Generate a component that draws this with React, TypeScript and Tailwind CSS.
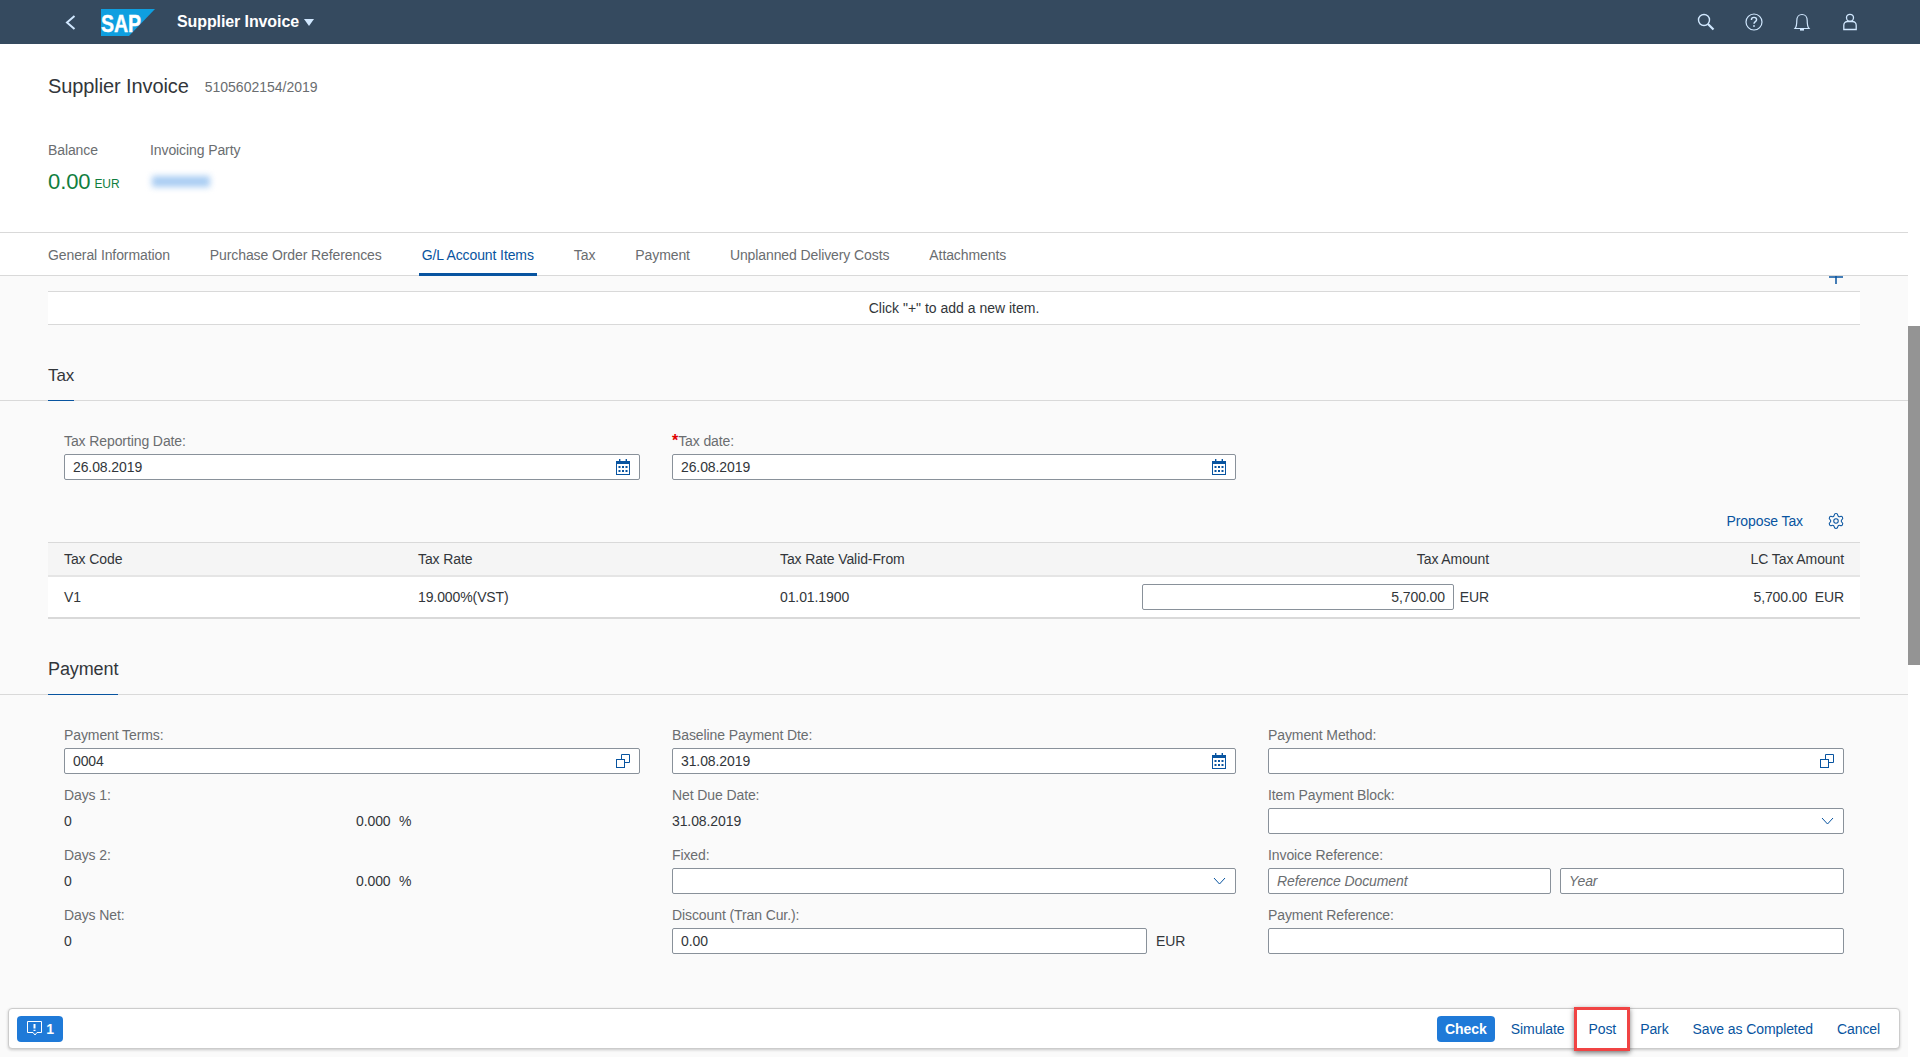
import type { ReactNode } from 'react';
import { Settings } from 'lucide-react';

const CalendarIcon = () => (
  <svg width="14" height="16" viewBox="0 0 14 16" className="text-[#0854a0]">
    <rect x="0.5" y="2.5" width="13" height="13" fill="none" stroke="currentColor" />
    <rect x="0" y="2" width="14" height="3" fill="currentColor" />
    <rect x="3" y="0" width="1.4" height="3" fill="currentColor" />
    <rect x="9.6" y="0" width="1.4" height="3" fill="currentColor" />
    <g fill="currentColor">
      <rect x="2.5" y="7" width="2" height="2" />
      <rect x="6" y="7" width="2" height="2" />
      <rect x="9.5" y="7" width="2" height="2" />
      <rect x="2.5" y="11" width="2" height="2" />
      <rect x="6" y="11" width="2" height="2" />
      <rect x="9.5" y="11" width="2" height="2" />
    </g>
  </svg>
);

const ValueHelpIcon = () => (
  <svg width="14" height="14" viewBox="0 0 14 14" fill="none" stroke="#0854a0">
    <rect x="0.5" y="5.5" width="8" height="8" />
    <path d="M5.5 5V0.5H13.5V8.5H9" />
  </svg>
);

const ChevronIcon = () => (
  <svg width="13" height="8" viewBox="0 0 13 8" fill="none" stroke="#0854a0">
    <path d="M1 1L6.5 7L12 1" />
  </svg>
);

function Input({ value, placeholder, right, icon, className }: { value?: string; placeholder?: string; right?: boolean; icon?: ReactNode; className?: string }) {
  return (
    <div className={`h-[26px] bg-white border border-[#89919a] rounded-[2px] pl-2 pr-2 flex items-center justify-between text-[#32363a] ${className ?? ''}`}>
      {placeholder ? <span className="italic text-[#6a6d70]">{placeholder}</span> : <span className={right ? 'ml-auto' : ''}>{value}</span>}
      {icon && <span className="flex items-center justify-center w-[14px] mr-px">{icon}</span>}
    </div>
  );
}

function Field({ label, required, children }: { label: string; required?: boolean; children: ReactNode }) {
  return (
    <div>
      <div className="h-4 leading-4 mb-[5px] text-[#6a6d70]">
        {required && <span className="text-[#e00000] text-base font-bold leading-none">*</span>}
        {label}
      </div>
      {children}
    </div>
  );
}

function SectionTitle({ title, height, size }: { title: string; height: string; size: string }) {
  return (
    <div className={`${height} flex items-end border-b border-[#d9d9d9] pl-12`}>
      <span className={`${size} leading-[22px] -mb-px border-b border-[#0854a0] text-[#32363a]`}>{title}</span>
    </div>
  );
}

function Display({ children }: { children: ReactNode }) {
  return <div className="h-[26px] flex items-center text-[#32363a]">{children}</div>;
}

function Percent() {
  return (
    <Display>
      <span className="w-[292px]">0</span>
      <span className="w-[43px]">0.000</span>
      <span>%</span>
    </Display>
  );
}

const tabs = ['General Information', 'Purchase Order References', 'G/L Account Items', 'Tax', 'Payment', 'Unplanned Delivery Costs', 'Attachments'];

export default function App() {
  return (
    <div className="relative h-screen overflow-hidden bg-white text-sm tracking-[-0.1px] font-['Liberation_Sans',Arial,sans-serif] text-[#32363a]">
      {/* Shell bar */}
      <header className="h-11 bg-[#354a5f] flex items-center text-[#d1e8ff]">
        <svg width="11" height="15" viewBox="0 0 11 15" fill="none" stroke="#d1e8ff" strokeWidth="2" className="ml-[65px]">
          <path d="M9.5 1L2 7.5L9.5 14" />
        </svg>
        <svg width="54" height="27" viewBox="0 0 54 27" className="ml-[25px]">
          <polygon points="0,0 54,0 28,27 0,27" fill="#0f9fe0" />
          <text x="0" y="23" fill="#ffffff" stroke="#ffffff" strokeWidth="0.4" fontSize="23" fontWeight="700" fontFamily="Liberation Sans" textLength="40" lengthAdjust="spacingAndGlyphs">SAP</text>
        </svg>
        <span className="ml-[22px] text-base font-bold text-white">Supplier Invoice</span>
        <svg width="10" height="7" viewBox="0 0 10 7" className="ml-[5px]">
          <polygon points="0,0 10,0 5,7" fill="#d1e8ff" />
        </svg>
        <div className="ml-auto flex items-center gap-[30px] pr-[61px]">
          <svg width="18" height="18" viewBox="0 0 18 18" fill="none" stroke="#d1e8ff">
            <circle cx="7" cy="7" r="5.5" strokeWidth="1.4" />
            <path d="M11 11L16.5 16.5" strokeWidth="2.2" />
          </svg>
          <svg width="18" height="18" viewBox="0 0 18 18" fill="none" stroke="#d1e8ff">
            <circle cx="9" cy="9" r="8" strokeWidth="1.2" />
            <path d="M6.4 7C6.4 5.4 7.6 4.4 9 4.4C10.5 4.4 11.6 5.4 11.6 6.7C11.6 8.6 9 8.6 9 10.8" strokeWidth="1.4" />
            <rect x="8.2" y="12.2" width="1.6" height="1.6" fill="#d1e8ff" stroke="none" />
          </svg>
          <svg width="18" height="18" viewBox="0 0 18 18" fill="none" stroke="#d1e8ff" strokeWidth="1.2">
            <path d="M2 15.5C3.8 13.5 3.8 11 3.8 7.5C3.8 4 6 1.5 9 1.5C12 1.5 14.2 4 14.2 7.5C14.2 11 14.2 13.5 16 15.5Z" />
            <path d="M7 16.8H11" strokeWidth="1.6" />
          </svg>
          <svg width="18" height="18" viewBox="0 0 18 18" fill="none" stroke="#d1e8ff" strokeWidth="1.3">
            <circle cx="9" cy="4.8" r="3.5" />
            <path d="M2.8 16.5V12.2C2.8 10 4.6 8.5 6.5 8.5H11.5C13.4 8.5 15.2 10 15.2 12.2V16.5Z" />
          </svg>
        </div>
      </header>

      <div className="flex h-[calc(100vh-44px)]">
        <div className="w-[1908px] flex flex-col">
          {/* Object header */}
          <div className="h-[189px] border-b border-[#d9d9d9] pl-12 pt-[30px]">
            <div className="flex items-center h-6">
              <h1 className="text-xl font-normal">Supplier Invoice</h1>
              <span className="ml-4 mt-[2px] tracking-normal text-[#6a6d70]">5105602154/2019</span>
            </div>
            <div className="flex mt-11">
              <div className="w-[102px]">
                <div className="h-4 leading-4 text-[#6a6d70]">Balance</div>
                <div className="mt-[9px] h-[30px] flex items-center text-[#107e3e]">
                  <span className="text-[22px]">0.00</span>
                  <span className="ml-1 text-xs mt-[3px]">EUR</span>
                </div>
              </div>
              <div>
                <div className="h-4 leading-4 text-[#6a6d70]">Invoicing Party</div>
                <div className="mt-[8px] h-[30px] flex items-center">
                  <div className="ml-[2px] w-[58px] h-[11px] bg-[#a9cdf3] blur-[3px]" />
                </div>
              </div>
            </div>
          </div>

          {/* Tabs */}
          <nav className="h-[43px] border-b border-[#d9d9d9] pl-[45px] flex gap-[34px] shrink-0">
            {tabs.map((tab) => (
              <div
                key={tab}
                className={`h-[43px] px-[3px] flex items-center ${tab === 'G/L Account Items' ? 'text-[#0854a0] border-b-[3px] border-[#0854a0] pt-[3px]' : 'text-[#6a6d70]'}`}
              >
                {tab}
              </div>
            ))}
          </nav>

          {/* Scrolled content */}
          <main className="flex-1 overflow-hidden bg-[#fafafa]">
            <div className="h-[15px] pl-[1829px]">
              <svg width="14" height="8" viewBox="0 0 14 8" fill="none" stroke="#0854a0" strokeWidth="1.5">
                <path d="M0 1H14M7 0V8" />
              </svg>
            </div>
            <div className="mx-12 h-[34px] bg-white border-y border-[#d9d9d9] tracking-normal flex items-center justify-center">Click "+" to add a new item.</div>

            <SectionTitle title="Tax" height="h-[76px]" size="text-[17px] pb-[13px]" />
            <div className="px-16 pt-8 grid grid-cols-[576px_564px_576px] gap-x-8">
              <Field label="Tax Reporting Date:">
                <Input value="26.08.2019" icon={<CalendarIcon />} />
              </Field>
              <Field label="Tax date:" required>
                <Input value="26.08.2019" icon={<CalendarIcon />} />
              </Field>
            </div>

            <div className="mx-12 pt-[31px] pb-[11px] pr-[15px] flex items-center justify-end h-[62px]">
              <span className="text-[#0854a0]">Propose Tax</span>
              <Settings size={18} strokeWidth={1.4} className="ml-6 text-[#0854a0]" />
            </div>

            <div className="mx-12 border-t border-[#d9d9d9]">
              <div className="h-8 bg-[#f5f5f5] border-b-2 border-[#e5e5e5] box-content px-4 grid grid-cols-[354px_362px_362px_347px_355px] items-center text-[#32363a]">
                <div>Tax Code</div>
                <div>Tax Rate</div>
                <div>Tax Rate Valid-From</div>
                <div className="text-right">Tax Amount</div>
                <div className="text-right">LC Tax Amount</div>
              </div>
              <div className="h-10 bg-white border-b-2 border-[#d9d9d9] box-content px-4 grid grid-cols-[354px_362px_362px_347px_355px] items-center">
                <div>V1</div>
                <div>19.000%(VST)</div>
                <div>01.01.1900</div>
                <div className="flex items-center justify-between">
                  <Input value="5,700.00" right className="w-[312px]" />
                  <span>EUR</span>
                </div>
                <div className="text-right">5,700.00&nbsp;&nbsp;EUR</div>
              </div>
            </div>

            <SectionTitle title="Payment" height="h-[76px]" size="text-lg pb-[14px]" />
            <div className="px-16 pt-8 grid grid-cols-[576px_564px_576px] gap-x-8 auto-rows-[60px]">
              <Field label="Payment Terms:">
                <Input value="0004" icon={<ValueHelpIcon />} />
              </Field>
              <Field label="Baseline Payment Dte:">
                <Input value="31.08.2019" icon={<CalendarIcon />} />
              </Field>
              <Field label="Payment Method:">
                <Input icon={<ValueHelpIcon />} />
              </Field>

              <Field label="Days 1:">
                <Percent />
              </Field>
              <Field label="Net Due Date:">
                <Display>31.08.2019</Display>
              </Field>
              <Field label="Item Payment Block:">
                <Input icon={<ChevronIcon />} />
              </Field>

              <Field label="Days 2:">
                <Percent />
              </Field>
              <Field label="Fixed:">
                <Input icon={<ChevronIcon />} />
              </Field>
              <Field label="Invoice Reference:">
                <div className="flex gap-[9px]">
                  <Input placeholder="Reference Document" className="w-[283px]" />
                  <Input placeholder="Year" className="flex-1" />
                </div>
              </Field>

              <Field label="Days Net:">
                <Display>0</Display>
              </Field>
              <Field label="Discount (Tran Cur.):">
                <div className="flex items-center gap-[9px]">
                  <Input value="0.00" className="w-[475px]" />
                  <span>EUR</span>
                </div>
              </Field>
              <Field label="Payment Reference:">
                <Input />
              </Field>
            </div>
          </main>
        </div>

        {/* Scrollbar */}
        <div className="w-3 bg-white pt-[282px]">
          <div className="h-[339px] bg-[#949494]" />
        </div>
      </div>

      {/* Floating footer */}
      <footer className="absolute left-2 bottom-2 w-[1892px] h-[41px] bg-white border border-[#cccccc] rounded-[4px] shadow-[0_1px_3px_rgba(0,0,0,0.2)] flex items-center pl-2 pr-[19px]">
        <button className="h-[26px] w-[46px] bg-[#1f7ad8] rounded-[4px] text-white font-bold flex items-center justify-center gap-[3px]">
          <svg width="17" height="17" viewBox="0 0 17 17" fill="none" stroke="#ffffff">
            <path d="M1.5 1.5H15.5V12.5H11L9 15L7 12.5H1.5Z" />
            <path d="M8.5 4V8.5M8.5 9.8V11" strokeWidth="2" />
          </svg>
          1
        </button>
        <div className="ml-auto flex items-center gap-6 text-[#0854a0]">
          <button className="h-[26px] w-[58px] -mr-2 bg-[#1f7ad8] rounded-[4px] text-white font-bold">Check</button>
          <span>Simulate</span>
          <span className="relative">
            Post
            <span className="absolute -left-[15px] -right-[14px] -top-[12px] -bottom-[12px] border-[3px] border-[#f04444] shadow-[0_2px_5px_rgba(0,0,0,0.5)]" />
          </span>
          <span>Park</span>
          <span>Save as Completed</span>
          <span>Cancel</span>
        </div>
      </footer>
    </div>
  );
}
